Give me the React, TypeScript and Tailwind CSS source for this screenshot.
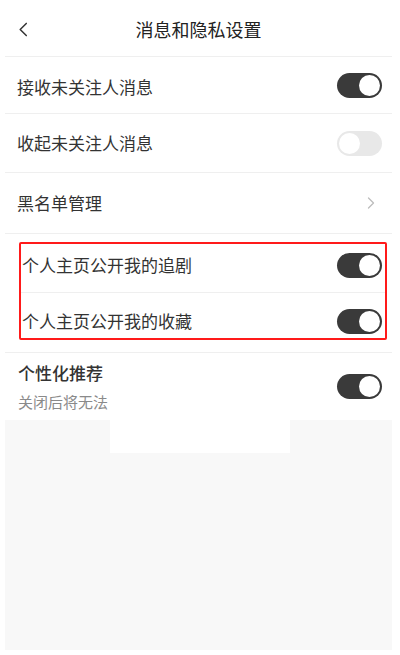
const Toggle = ({ on }: { on: boolean }) => (
  <div
    className={
      on
        ? 'w-[45px] h-[25px] rounded-full bg-[#3a3a3a] p-[2px] flex justify-end'
        : 'w-[45px] h-[25px] rounded-full bg-[#e8e8e8] p-[2px] flex justify-start'
    }
  >
    <div className="w-[21px] h-[21px] rounded-full bg-white" />
  </div>
);

const Chevron = ({ className, color }: { className: string; color: string }) => (
  <svg className={className} viewBox="0 0 10 16" fill="none">
    <path d="M8.5 1.5 L2 8 L8.5 14.5" stroke={color} strokeWidth="1.6" strokeLinecap="round" strokeLinejoin="round" />
  </svg>
);

const Divider = () => <div className="h-px bg-[#efefef]" />;

const App = () => {
  return (
    <div
      className="relative w-[400px] h-[655px] bg-white overflow-hidden text-[#333]"
      style={{ fontFamily: '"Noto Sans CJK SC", "Noto Sans", sans-serif' }}
    >
      <div className="ml-[5px] mr-[8px] flex flex-col h-full">
        {/* header */}
        <div className="relative h-[56px] flex items-center justify-center">
          <Chevron className="absolute left-[13px] top-[22px] w-[10px] h-[15px]" color="#333" />
          <span className="text-[18px] text-[#222] pt-[2px]">消息和隐私设置</span>
        </div>
        <Divider />

        <div className="h-[56px] flex items-center justify-between pl-[12px] pr-[10px]">
          <span className="text-[17px] pt-[4px]">接收未关注人消息</span>
          <Toggle on />
        </div>
        <Divider />

        <div className="h-[58px] flex items-center justify-between pl-[12px] pr-[10px]">
          <span className="text-[17px]">收起未关注人消息</span>
          <Toggle on={false} />
        </div>
        <Divider />

        <div className="h-[60px] flex items-center justify-between pl-[12px] pr-[17px]">
          <span className="text-[17px]">黑名单管理</span>
          <svg className="w-[8px] h-[12px]" viewBox="0 0 8 12" fill="none">
            <path d="M1.5 1 L6.5 6 L1.5 11" stroke="#bdbdbd" strokeWidth="1.3" strokeLinecap="round" strokeLinejoin="round" />
          </svg>
        </div>
        <Divider />

        {/* highlighted group */}
        <div className="mt-[8px] ml-[14px] mr-[5px] border-2 border-[#ff1a1a] rounded-[2px]">
          <div className="h-[48px] pb-[6px] flex items-center justify-between pl-[1px] pr-[3px]">
            <span className="text-[17px]">个人主页公开我的追剧</span>
            <Toggle on />
          </div>
          <Divider />
          <div className="h-[45px] pt-[11px] flex items-center justify-between pl-[1px] pr-[3px]">
            <span className="text-[17px]">个人主页公开我的收藏</span>
            <Toggle on />
          </div>
        </div>

        <div className="mt-[12px]">
          <Divider />
        </div>

        <div className="h-[67px] flex items-center justify-between pl-[13px] pr-[10px]">
          <div className="flex flex-col">
            <span className="text-[17px] font-medium leading-[22px]">个性化推荐</span>
            <span className="text-[15px] text-[#8a8a8a] leading-[20px] mt-[8px]">关闭后将无法</span>
          </div>
          <Toggle on />
        </div>

        <div className="flex-1 bg-[#f8f8f8] mb-[5px]" />
      </div>

      {/* redaction patch */}
      <div className="absolute left-[110px] top-[353px] w-[180px] h-[100px] bg-white" />
    </div>
  );
};

export default App;
